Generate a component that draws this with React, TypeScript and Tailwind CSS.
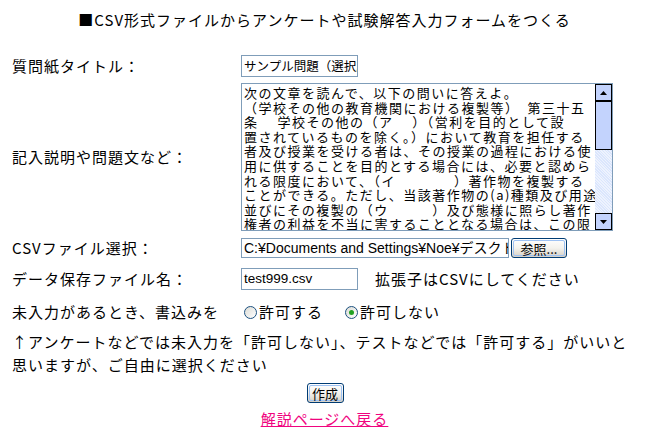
import React from "react";

const jp = "font-['Noto_Sans_CJK_JP','Noto_Sans_CJK_SC',sans-serif]";

const BODY_LINES = [
  "次の文章を読んで、以下の問いに答えよ。",
  "（学校その他の教育機関における複製等）　第三十五",
  "条　 学校その他の（ア　 ）（営利を目的として設",
  "置されているものを除く。）において教育を担任する",
  "者及び授業を受ける者は、その授業の過程における使",
  "用に供することを目的とする場合には、必要と認めら",
  "れる限度において、（イ　　　　）著作物を複製する",
  "ことができる。ただし、当該著作物の(a)種類及び用途",
  "並びにその複製の（ウ　　　）及び態様に照らし著作",
  "権者の利益を不当に害することとなる場合は、この限",
];

function XpButton({ label, w }: { label: string; w: string }) {
  return (
    <div
      className={`${w} h-[20px] rounded-[3px] border border-[#003c74] bg-gradient-to-b from-white via-[#f4f3ee] to-[#d6d0c5] p-[1px]`}
    >
      <div className="flex h-full w-full items-center justify-center rounded-[2px] border border-[#9ec2f3] text-[13px] leading-none">
        {label}
      </div>
    </div>
  );
}

function Radio({ checked }: { checked?: boolean }) {
  return (
    <span className="flex h-[13px] w-[13px] items-center justify-center rounded-full border border-[#1c5180] bg-gradient-to-br from-[#dcdcd6] to-white">
      {checked && <span className="h-[5px] w-[5px] rounded-full bg-[#21a121]" />}
    </span>
  );
}

function ScrollArrow({ up }: { up?: boolean }) {
  return (
    <div className="flex h-[17px] w-[17px] items-center justify-center border border-[#000] bg-[#c3d3fd]">
      <svg width="7" height="4" viewBox="0 0 7 4">
        {up ? <path d="M0 4 L3.5 0 L7 4 Z" fill="#000" /> : <path d="M0 0 L3.5 4 L7 0 Z" fill="#000" />}
      </svg>
    </div>
  );
}

export default function App() {
  return (
    <div className={`h-[428px] w-[649px] overflow-hidden bg-white text-black ${jp}`}>
      {/* 見出し */}
      <div className="pt-[12px] text-center text-[15px] leading-[16px] tracking-[1px]">
        ■CSV形式ファイルからアンケートや試験解答入力フォームをつくる
      </div>

      <div className="pl-[12px] text-[15px] leading-[16px] tracking-[1px]">
        {/* タイトル */}
        <div className="mt-[27px] flex h-[22px] items-center">
          <div className="w-[229px]">質問紙タイトル：</div>
          <div className="flex h-[22px] w-[117px] items-center overflow-hidden whitespace-nowrap border border-[#7f9db9] px-[2px] text-[12.5px] tracking-normal">
            サンプル問題（選択肢）
          </div>
        </div>

        {/* 問題文 */}
        <div className="mt-[6px] flex items-center">
          <div className="w-[229px]">記入説明や問題文など：</div>
          <div className="flex h-[148px] w-[372px] border border-[#7f9db9]">
            <div className="flex-1 overflow-hidden pl-[2px] pt-[2px] text-[13px] leading-[14.6px] tracking-[1.5px]">
              {BODY_LINES.map((l) => (
                <div key={l} className="whitespace-nowrap">
                  {l}
                </div>
              ))}
            </div>
            <div className="flex w-[17px] flex-col bg-[#eef3fe]">
              <ScrollArrow up />
              <div className="h-[49px] border border-[#000] bg-[#c3d3fd]" />
              <div className="flex-1 bg-[repeating-linear-gradient(45deg,#eef3fe_0px,#eef3fe_1px,#dbe6fd_1px,#dbe6fd_2px)]" />
              <ScrollArrow />
            </div>
          </div>
        </div>

        {/* CSV */}
        <div className="mt-[7px] flex h-[20px] items-center">
          <div className="w-[229px]">CSVファイル選択：</div>
          <div className="flex h-[20px] w-[268px] items-center overflow-hidden whitespace-nowrap border border-[#7f9db9] px-[2px] font-['Liberation_Sans','Noto_Sans_CJK_JP',sans-serif] text-[14px] tracking-normal">
            C:¥Documents and Settings¥Noe¥デスクトップ¥test.csv
          </div>
          <div className="ml-[2px] tracking-normal">
            <XpButton label="参照..." w="w-[56px]" />
          </div>
        </div>

        {/* 保存ファイル名 */}
        <div className="mt-[10px] flex h-[22px] items-center">
          <div className="w-[229px]">データ保存ファイル名：</div>
          <div className="flex h-[22px] w-[117px] items-center overflow-hidden whitespace-nowrap border border-[#7f9db9] px-[2px] font-['Liberation_Sans',sans-serif] text-[13.5px] tracking-normal">
            test999.csv
          </div>
          <div className="ml-[17px]">拡張子はCSVにしてください</div>
        </div>

        {/* 未入力 */}
        <div className="mt-[12px] flex h-[20px] items-center">
          <div className="w-[229px]">未入力があるとき、書込みを</div>
          <div className="ml-[3px] flex items-center gap-[2px]">
            <Radio />
            <span>許可する</span>
          </div>
          <div className="ml-[22px] flex items-center gap-[2px]">
            <Radio checked />
            <span>許可しない</span>
          </div>
        </div>

        <p className="mt-[8px] w-[626px] leading-[23px]">
          ↑アンケートなどでは未入力を「許可しない」、テストなどでは「許可する」がいいと思いますが、ご自由に選択ください
        </p>
      </div>

      <div className="mt-[7px] flex justify-center pl-[1px]">
        <XpButton label="作成" w="w-[37px]" />
      </div>

      <div className="mt-[8px] text-center text-[15px] leading-[16px] tracking-[1px]">
        <a href="#" className="text-[#f0047f] underline underline-offset-[1px]">
          解説ページへ戻る
        </a>
      </div>
    </div>
  );
}
